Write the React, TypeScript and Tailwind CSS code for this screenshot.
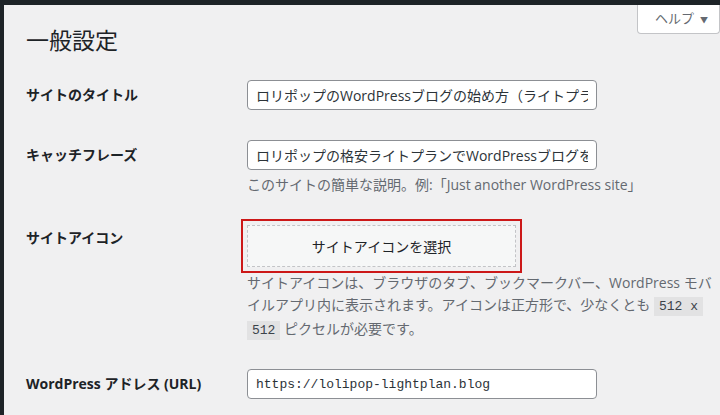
export default function App() {
  const font = { fontFamily: '"Open Sans", "Noto Sans CJK JP", sans-serif' };
  return (
    <div className="w-[720px] h-[415px] overflow-hidden bg-[#1d2327] pt-[5px] pl-[4px]" style={font}>
      <div className="relative h-full bg-[#f0f0f1] pl-[22px] text-[#1d2327]">
        {/* help tab */}
        <div className="absolute right-0 top-0 w-[83px] h-[29px] bg-white border border-t-0 border-[#c3c4c7] rounded-b-[4px] flex items-center pl-[17px] gap-[6px] text-[13px] text-[#646970]">
          <span>ヘルプ</span>
          <span className="text-[8px] mt-[2px]">▼</span>
        </div>

        <h1 className="pt-[20px] text-[23px] leading-[30px] font-normal">一般設定</h1>

        <div className="mt-[25px] flex">
          <div className="w-[221px] pt-[5px] text-[14px] leading-[20px] font-bold">サイトのタイトル</div>
          <input
            readOnly
            value="ロリポップのWordPressブログの始め方（ライトプラン編）"
            className="w-[350px] h-[30px] rounded-[4px] border border-[#8c8f94] bg-white px-[8px] text-[14px] text-[#2c3338] outline-none"
            style={font}
          />
        </div>

        <div className="mt-[30px] flex">
          <div className="w-[221px] pt-[5px] text-[14px] leading-[20px] font-bold">キャッチフレーズ</div>
          <div className="flex flex-col">
            <input
              readOnly
              value="ロリポップの格安ライトプランでWordPressブログを始める方法"
              className="w-[350px] h-[30px] rounded-[4px] border border-[#8c8f94] bg-white px-[8px] text-[14px] text-[#2c3338] outline-none"
              style={font}
            />
            <p className="mt-[5px] text-[14px] leading-[20px] text-[#646970] whitespace-nowrap">
              このサイトの簡単な説明。例:「Just another WordPress site」
            </p>
          </div>
        </div>

        <div className="mt-[30px] flex">
          <div className="w-[221px] pt-[3px] text-[14px] leading-[20px] font-bold">サイトアイコン</div>
          <div className="flex flex-col">
            <button className="w-[269px] h-[42px] border border-dashed border-[#c3c4c7] bg-[#f6f7f7] text-[14px] text-[#1d2327] outline-2 outline-solid outline-[#cc1818] outline-offset-4">
              サイトアイコンを選択
            </button>
            <p className="mt-[5px] text-[14px] leading-[22px] text-[#646970] whitespace-nowrap">
              サイトアイコンは、ブラウザのタブ、ブックマークバー、WordPress モバ
              <br />
              イルアプリ内に表示されます。アイコンは正方形で、少なくとも{' '}
              <code className="bg-[#e2e2e3] px-[5px] py-[2px] text-[13px] text-[#3c434a]" style={{ fontFamily: '"Liberation Mono", monospace' }}>512 x</code>
              <br />
              <code className="bg-[#e2e2e3] px-[5px] py-[2px] text-[13px] text-[#3c434a]" style={{ fontFamily: '"Liberation Mono", monospace' }}>512</code>{' '}
              ピクセルが必要です。
            </p>
          </div>
        </div>

        <div className="mt-[27px] flex">
          <div className="w-[221px] pt-[5px] text-[14px] leading-[20px] font-bold">WordPress アドレス (URL)</div>
          <input
            readOnly
            value="https://lolipop-lightplan.blog"
            className="w-[350px] h-[30px] rounded-[4px] border border-[#8c8f94] bg-white px-[8px] text-[13px] text-[#2c3338] outline-none"
            style={{ fontFamily: '"Liberation Mono", monospace' }}
          />
        </div>
      </div>
    </div>
  );
}
